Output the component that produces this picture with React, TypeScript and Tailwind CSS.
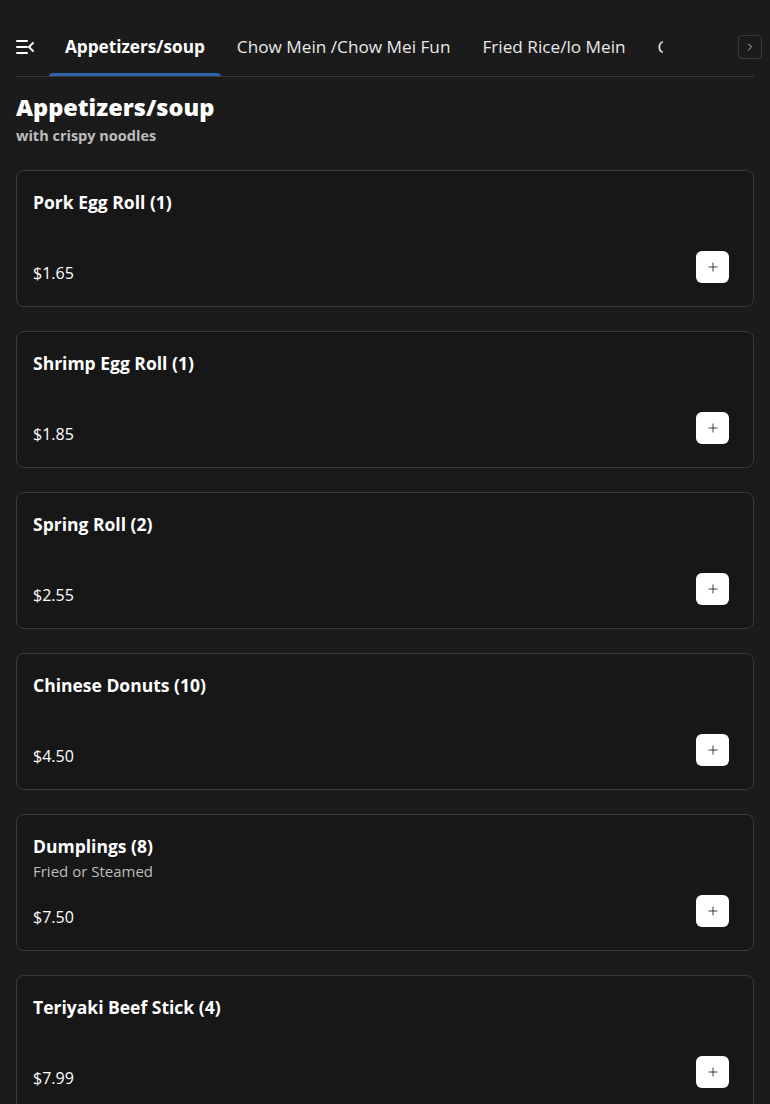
import { Plus, ChevronRight } from "lucide-react";

type Item = { name: string; desc?: string; price: string };

const ITEMS: Item[] = [
  { name: "Pork Egg Roll (1)", price: "$1.65" },
  { name: "Shrimp Egg Roll (1)", price: "$1.85" },
  { name: "Spring Roll (2)", price: "$2.55" },
  { name: "Chinese Donuts (10)", price: "$4.50" },
  { name: "Dumplings (8)", desc: "Fried or Steamed", price: "$7.50" },
  { name: "Teriyaki Beef Stick (4)", price: "$7.99" },
  { name: "Crab Rangoon (6)", price: "$6.50" },
];

const TABS = ["Appetizers/soup", "Chow Mein /Chow Mei Fun", "Fried Rice/lo Mein", "Chef Specials"];

function MenuCollapseIcon() {
  return (
    <svg width="18" height="14" viewBox="0 0 18 14" fill="none" stroke="white" strokeWidth="2" strokeLinecap="round" strokeLinejoin="round">
      <path d="M1 1h10M1 7h10M1 13h10" />
      <path d="M17 3l-4 4 4 4" />
    </svg>
  );
}

function ItemCard({ item }: { item: Item }) {
  return (
    <div className="rounded-lg border border-[#3a3a3a] bg-[#171717] px-4 pt-[18px] pb-[21px]">
      <div className="min-h-[62px]">
        <h3 className="text-[17.5px] leading-[26px] font-bold text-white">{item.name}</h3>
        {item.desc && <p className="text-[15px] leading-6 text-[#bdbdbd]">{item.desc}</p>}
      </div>
      <div className="flex items-start justify-between pr-2">
        <span className="pt-[10px] text-[16px] leading-6 text-white">{item.price}</span>
        <button className="flex h-8 w-[33px] items-center justify-center rounded-md bg-white text-[#222]">
          <Plus className="h-3.5 w-3.5" strokeWidth={1.5} />
        </button>
      </div>
    </div>
  );
}

export default function App() {
  return (
    <div className="min-h-screen bg-[#1b1b1b] px-4 text-white" style={{ fontFamily: "'Open Sans', sans-serif" }}>
      {/* tab bar */}
      <div className="relative flex h-[77px] items-stretch border-b border-[#3a3a3a] pt-[18px]">
        <button className="flex w-[33px] shrink-0 items-center">
          <MenuCollapseIcon />
        </button>
        <div className="flex w-[614px] overflow-hidden">
          {TABS.map((t, i) => (
            <div
              key={t}
              className={`relative flex shrink-0 items-center whitespace-nowrap px-4 text-[17.2px] ${
                i === 0 ? "font-bold text-white" : "text-[#e8e8e8]"
              }`}
            >
              {t}
              {i === 0 && <span className="absolute bottom-[-1px] left-0 right-0 h-[4px] rounded-t-full bg-[#2c64b2]" />}
            </div>
          ))}
        </div>
        <div className="flex-1" />
        <div className="absolute right-[-8px] top-[18px] bottom-0 flex items-center">
          <button className="flex h-6 w-6 items-center justify-center rounded border border-[#3a3a3a] text-[#bbb]">
            <ChevronRight className="h-3 w-3" />
          </button>
        </div>
      </div>

      {/* category heading */}
      <div className="pt-[14px]">
        <h1 className="text-[23.5px] leading-8 font-extrabold">Appetizers/soup</h1>
        <p className="mt-[3px] text-[14.5px] leading-5 font-bold text-[#bdbdbd]">with crispy noodles</p>
      </div>

      <div className="mt-6 flex flex-col gap-6 pb-8">
        {ITEMS.map((item) => (
          <ItemCard key={item.name} item={item} />
        ))}
      </div>
    </div>
  );
}
